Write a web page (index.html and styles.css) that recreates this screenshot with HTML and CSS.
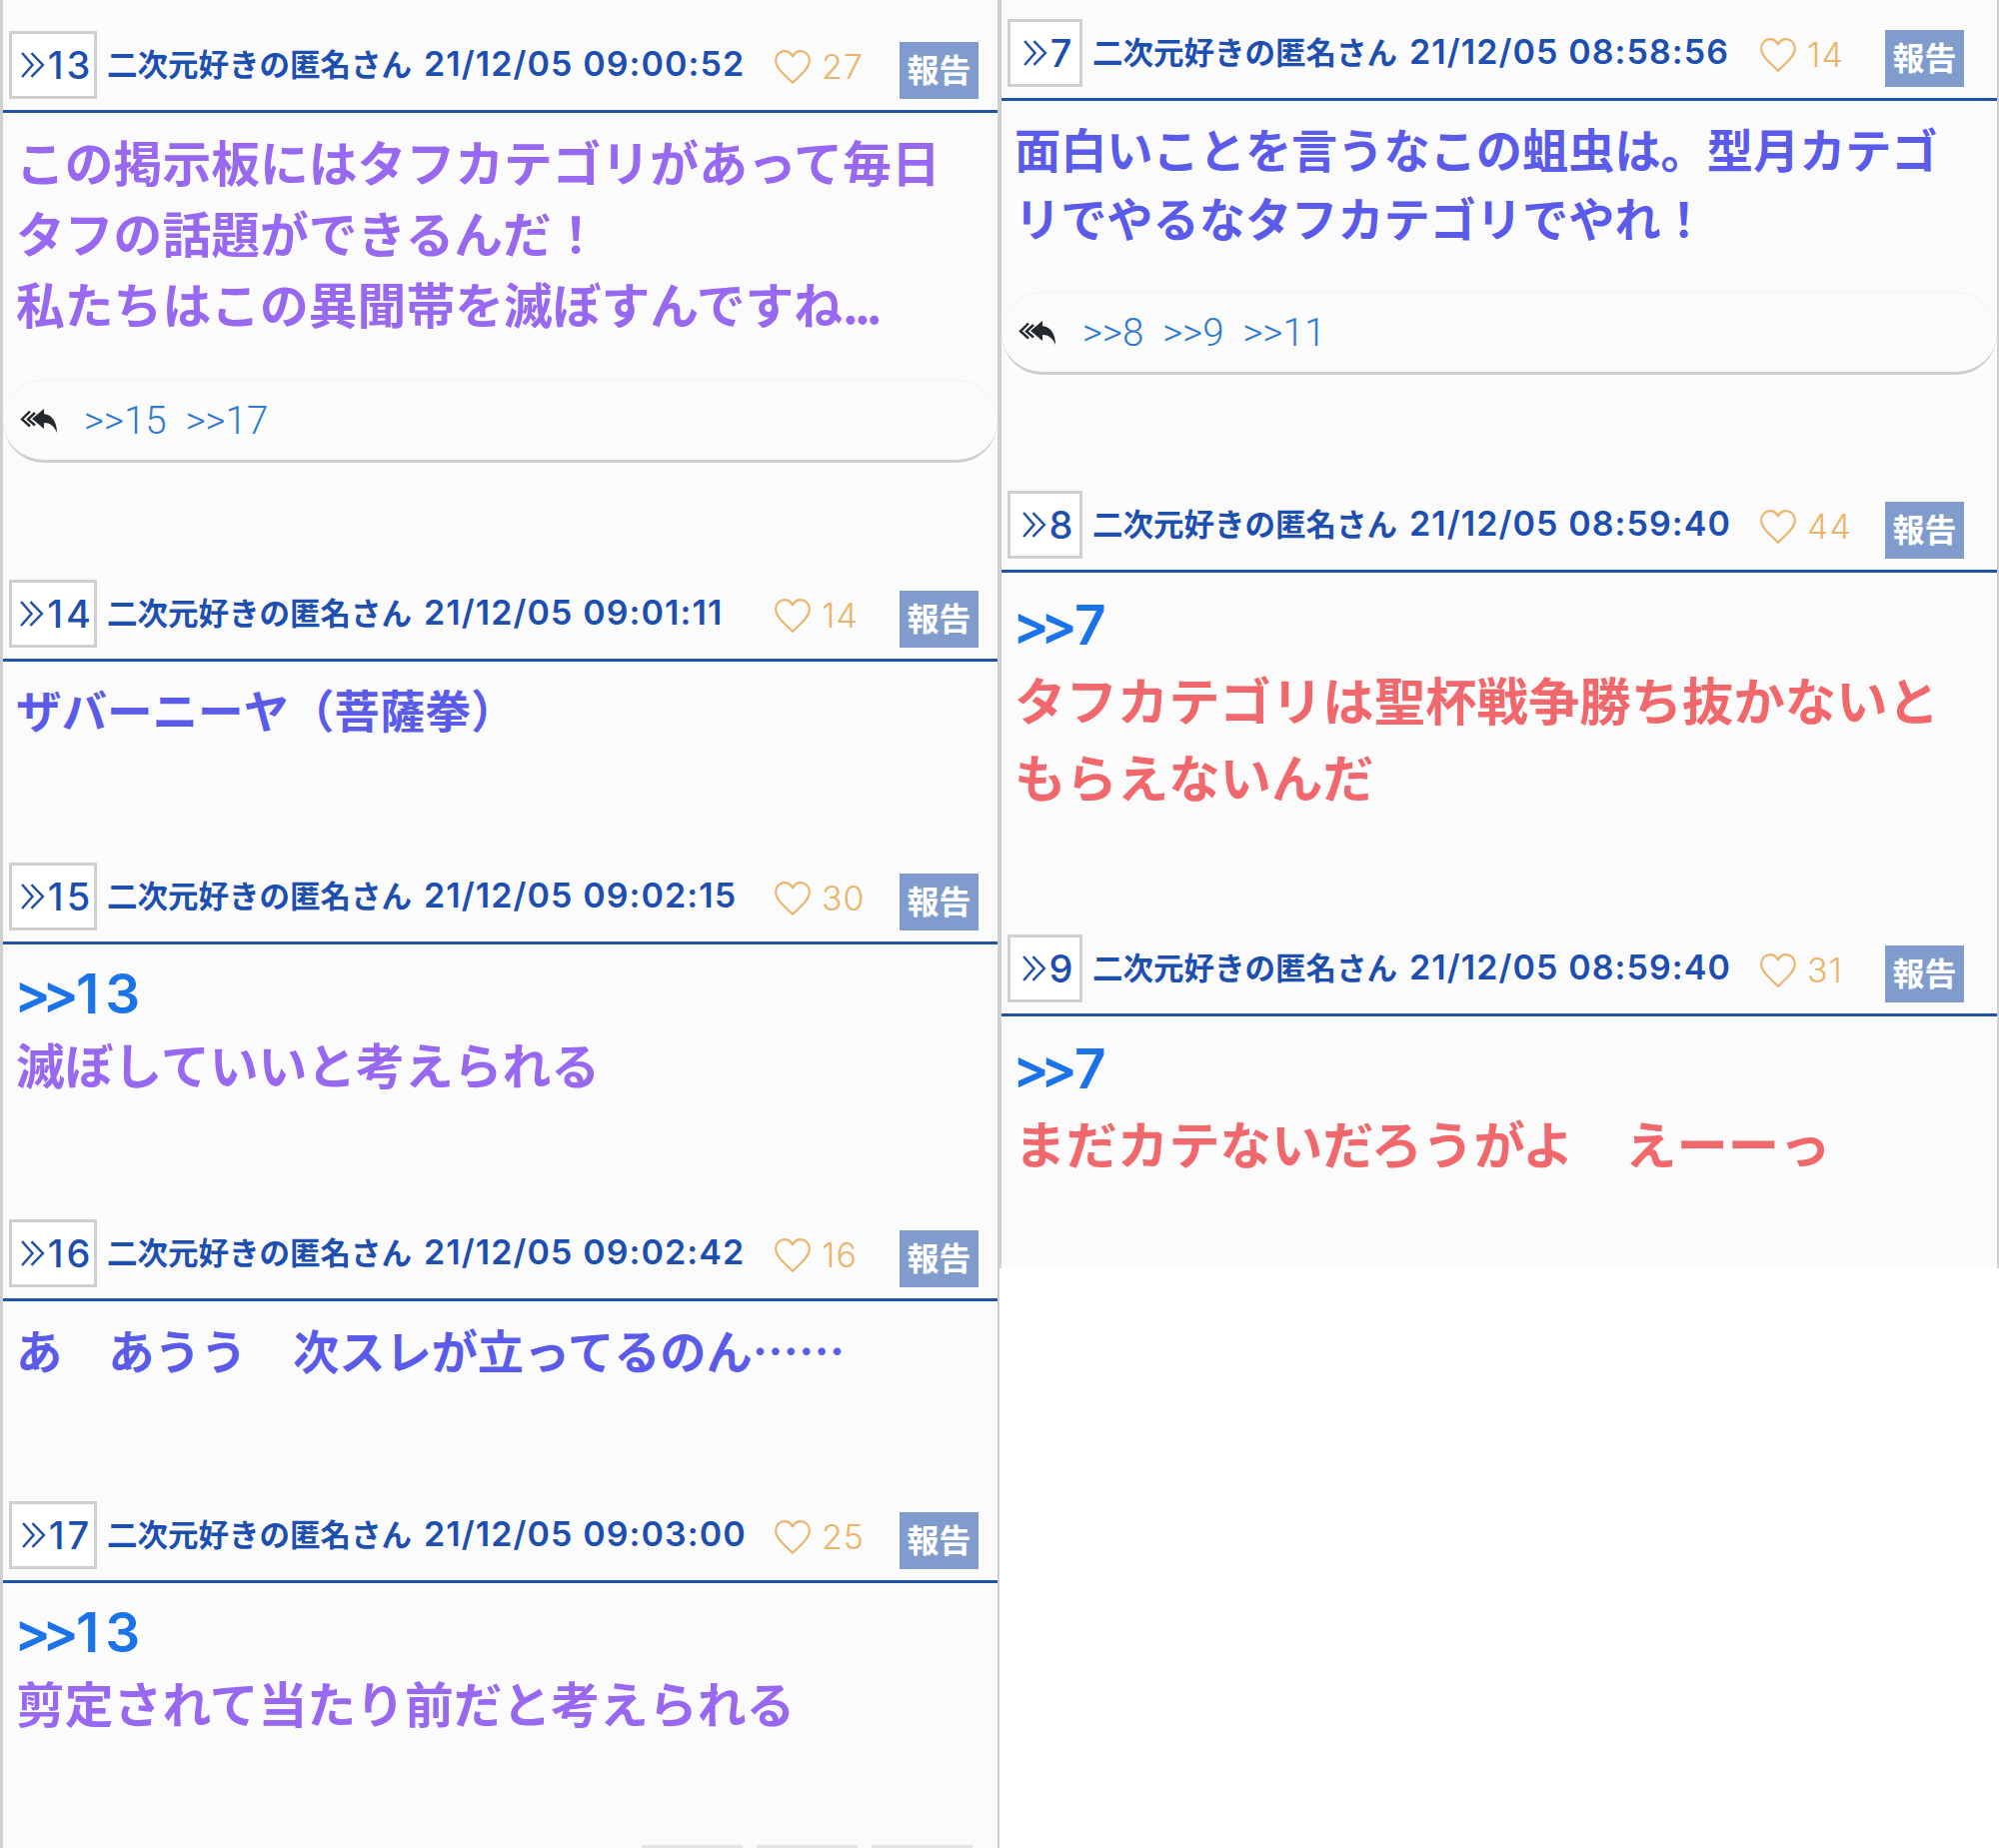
FILE: index.html
```html
<!DOCTYPE html>
<html lang="ja">
<head>
<meta charset="utf-8">
<title>掲示板</title>
<link rel="stylesheet" href="styles.css">
</head>
<body>
<svg class="defs" width="0" height="0" aria-hidden="true">
  <symbol id="chev" viewBox="0 0 24 25"><path d="M2 1l10 11.500L2 24M11 1l11 11.500L11 24" fill="none" stroke="currentColor" stroke-width="2.400"/></symbol>
  <symbol id="heart" viewBox="0 0 36 34"><path d="M18 32C10 24 2 18 2 10.500 2 5.500 6 2 10.500 2 14 2 16.500 4 18 7 19.500 4 22 2 25.500 2 30 2 34 5.500 34 10.500 34 18 26 24 18 32z" fill="none" stroke="currentColor" stroke-width="2" stroke-linejoin="round"/></symbol>
  <symbol id="reply" viewBox="0 0 37 24"><path d="M10 2.500L2 10.500l8 7M15 4L8 10.500l7 6" fill="none" stroke="currentColor" stroke-width="2.400"/><path d="M24 0L12 10l12 10v-6c6 0 10 3 13 10C37 13 32 6 24 5z" fill="currentColor"/></symbol>
</svg>
<main class="board">
  <section class="col col-left">
    <article class="post post-549">
      <header class="head">
        <a class="num"><svg class="chev"><use href="#chev"/></svg>13</a>
        <span class="who"><span>二次元好きの匿名さん</span><time class="date">21/12/05 09:00:52</time></span>
        <span class="likes"><svg class="heart"><use href="#heart"/></svg>27</span>
        <button class="report">報告</button>
      </header>
      <div class="text purple size-49 lh-71">この掲示板にはタフカテゴリがあって毎日<br>タフの話題ができるんだ！<br>私たちはこの異聞帯を滅ぼすんですね<span class="dots">...</span></div>
      <div class="replies replies-left"><svg class="reply"><use href="#reply"/></svg><a>&gt;&gt;15</a><a>&gt;&gt;17</a></div>
    </article>
    <article class="post post-283">
      <header class="head">
        <a class="num"><svg class="chev"><use href="#chev"/></svg>14</a>
        <span class="who"><span>二次元好きの匿名さん</span><time class="date">21/12/05 09:01:11</time></span>
        <span class="likes"><svg class="heart"><use href="#heart"/></svg>14</span>
        <button class="report">報告</button>
      </header>
      <div class="text indigo size-45 lh-71">ザバーニーヤ（菩薩拳）</div>
    </article>
    <article class="post post-357">
      <header class="head">
        <a class="num"><svg class="chev"><use href="#chev"/></svg>15</a>
        <span class="who"><span>二次元好きの匿名さん</span><time class="date">21/12/05 09:02:15</time></span>
        <span class="likes"><svg class="heart"><use href="#heart"/></svg>30</span>
        <button class="report">報告</button>
      </header>
      <div class="text purple size-49 lh-71"><a class="anchor"><span class="gt">&gt;&gt;</span>13</a>滅ぼしていいと考えられる</div>
    </article>
    <article class="post post-282">
      <header class="head">
        <a class="num"><svg class="chev"><use href="#chev"/></svg>16</a>
        <span class="who"><span>二次元好きの匿名さん</span><time class="date">21/12/05 09:02:42</time></span>
        <span class="likes"><svg class="heart"><use href="#heart"/></svg>16</span>
        <button class="report">報告</button>
      </header>
      <div class="text indigo size-46 lh-71">あ　あうう　次スレが立ってるのん……</div>
    </article>
    <article class="post post-344">
      <header class="head">
        <a class="num"><svg class="chev"><use href="#chev"/></svg>17</a>
        <span class="who"><span>二次元好きの匿名さん</span><time class="date">21/12/05 09:03:00</time></span>
        <span class="likes"><svg class="heart"><use href="#heart"/></svg>25</span>
        <button class="report">報告</button>
      </header>
      <div class="text purple size-49 lh-71"><a class="anchor"><span class="gt">&gt;&gt;</span>13</a>剪定されて当たり前だと考えられる</div>
    </article>
    <div class="pager"><span class="page"></span><span class="page"></span><span class="page"></span></div>
  </section>
  <section class="col col-right">
    <article class="post post-472">
      <header class="head">
        <a class="num"><svg class="chev"><use href="#chev"/></svg>7</a>
        <span class="who"><span>二次元好きの匿名さん</span><time class="date">21/12/05 08:58:56</time></span>
        <span class="likes"><svg class="heart"><use href="#heart"/></svg>14</span>
        <button class="report">報告</button>
      </header>
      <div class="text indigo size-46 lh-69">面白いことを言うなこの蛆虫は。型月カテゴ<br>リでやるなタフカテゴリでやれ！</div>
      <div class="replies replies-right"><svg class="reply"><use href="#reply"/></svg><a>&gt;&gt;8</a><a>&gt;&gt;9</a><a>&gt;&gt;11</a></div>
    </article>
    <article class="post post-444">
      <header class="head">
        <a class="num"><svg class="chev"><use href="#chev"/></svg>8</a>
        <span class="who"><span>二次元好きの匿名さん</span><time class="date">21/12/05 08:59:40</time></span>
        <span class="likes"><svg class="heart"><use href="#heart"/></svg>44</span>
        <button class="report">報告</button>
      </header>
      <div class="text red size-51 lh-77"><a class="anchor"><span class="gt">&gt;&gt;</span>7</a>タフカテゴリは聖杯戦争勝ち抜かないと<br>もらえないんだ</div>
    </article>
    <article class="post">
      <header class="head">
        <a class="num"><svg class="chev"><use href="#chev"/></svg>9</a>
        <span class="who"><span>二次元好きの匿名さん</span><time class="date">21/12/05 08:59:40</time></span>
        <span class="likes"><svg class="heart"><use href="#heart"/></svg>31</span>
        <button class="report">報告</button>
      </header>
      <div class="text red size-51 lh-77"><a class="anchor"><span class="gt">&gt;&gt;</span>7</a>まだカテないだろうがよ　えーーっ</div>
    </article>
  </section>
</main>
</body>
</html>
```

FILE: styles.css
```css
* { box-sizing: border-box; }
html, body { margin: 0; height: 1849px; overflow: hidden; background: #fff; }
body { font-family: "Inter", "Noto Sans CJK JP", sans-serif; }
.defs { position: absolute; }

.board { display: grid; grid-template-columns: 1000px 1000px; align-items: start; height: 1849px; }
.col { background: #fbfbfc; }
.col-left { height: 1849px; padding-top: 31px; border-left: 3px solid #cfcfcf; border-right: 2px solid #cfcfcf; position: relative; }
.col-right { height: 1269px; padding-top: 19px; border-left: 2px solid #cfcfcf; border-right: 2px solid #cfcfcf; overflow: hidden; }

.post-549 { height: 549px; }
.post-283 { height: 283px; }
.post-357 { height: 357px; }
.post-282 { height: 282px; }
.post-344 { height: 314px; }
.post-472 { height: 472px; }
.post-444 { height: 444px; }

.head { display: flex; align-items: flex-start; height: 82px; border-bottom: 3px solid #1f52a8; padding-left: 6px; color: #1d4fb0; }
.num { display: flex; align-items: center; justify-content: center; gap: 3px; flex: none; width: 75px; height: 68px; padding-left: 7px; background: #fff; border: 3px solid #cfcfcf; font-size: 38px; font-weight: 500; letter-spacing: 3px; }
.col-left .num { width: 88px; }
.chev { width: 25px; height: 26px; color: #2452a8; }
.who { display: flex; align-items: baseline; gap: 12px; flex: none; width: 636px; margin: 12px 0 0 10px; font-size: 30.500px; font-weight: 600; line-height: 42px; white-space: nowrap; }
.date { font-size: 34px; font-weight: 600; letter-spacing: 1.100px; }
.likes { display: flex; align-items: center; gap: 10px; flex: none; width: 127px; margin: 16px 0 0 31px; color: #eab46a; font-size: 34px; font-weight: 300; line-height: 40px; letter-spacing: 1px; }
.heart { width: 38px; height: 36px; }
.report { flex: none; width: 79px; height: 57px; margin: 11px 0 0 -1px; padding: 0 0 5px; border: 0; background: #7f9ccd; color: #fff; font: 700 32px "Noto Sans CJK JP", sans-serif; }

.text { padding: 12px 14px 0 13px; font-family: "Noto Sans CJK JP", sans-serif; font-weight: 700; white-space: nowrap; }
.purple { color: #9868f0; }
.indigo { color: #5b5bea; }
.red { color: #f0686c; }
.size-45 { font-size: 45.500px; }
.size-46 { font-size: 46.200px; }
.size-49 { font-size: 48.800px; }
.size-51 { font-size: 51.400px; }
.lh-69 { line-height: 69px; }
.lh-71 { line-height: 71px; }
.lh-77 { line-height: 77px; }
.dots { letter-spacing: -4px; }
.anchor { display: block; margin: 0 0 -2px -2px; padding-top: 2px; color: #1a73e8; font-size: 55px; font-family: "Inter", sans-serif; font-weight: 600; letter-spacing: 6px; }
.lh-77 .anchor { margin-bottom: -4px; }
.gt { letter-spacing: -9px; margin-right: 6px; }

.replies { display: flex; align-items: center; gap: 19px; height: 82px; padding: 0 0 0 17px; border-bottom: 3px solid #cfcfcf; border-radius: 42px; background: #fbfbfc; box-shadow: 0 -1px 1px #f2f2f2; color: #2f7bd0; font: 300 38.500px "Roboto", sans-serif; }
.replies-left { margin-top: 43px; }
.replies-right { margin-top: 42px; }
.reply { width: 37px; height: 24px; margin-right: 8px; color: #26292c; }

.pager { position: absolute; left: 639px; bottom: -40px; display: flex; gap: 14px; }
.page { width: 101px; height: 43px; border: 3px solid #e4e4e4; background: #fff; }
```
